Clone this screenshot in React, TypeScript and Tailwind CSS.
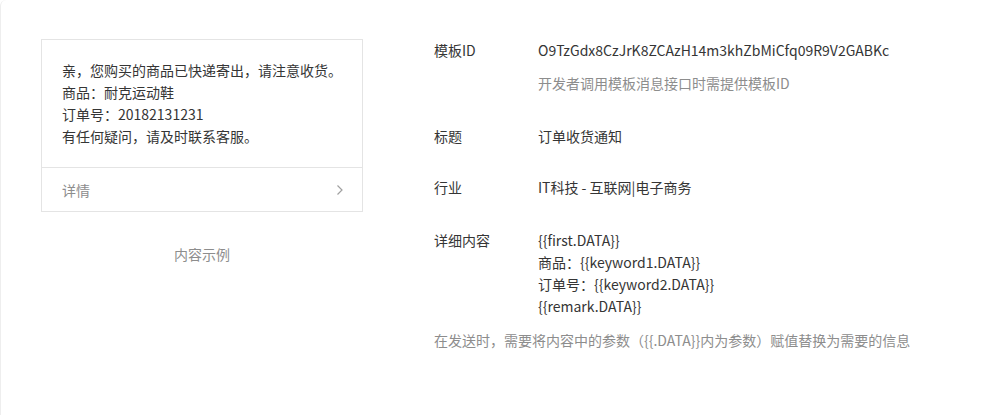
import React from 'react';

const font = { fontFamily: '"Microsoft YaHei", "Noto Sans CJK SC", sans-serif' };

const Row: React.FC<{ label: string; children: React.ReactNode; className?: string }> = ({ label, children, className }) => (
  <div className={`flex ${className ?? ''}`}>
    <div className="w-[104px] shrink-0">{label}</div>
    <div>{children}</div>
  </div>
);

export default function App() {
  return (
    <div style={font} className="h-[415px] w-[1001px] bg-white border-l border-[#eeeeee] rounded-tl-md text-[14px] leading-[22px] text-[#353535]">
      <div className="flex pt-[39px] pl-[40px]">
        {/* 内容示例 */}
        <div className="w-[322px] shrink-0">
          <div className="border border-[#e4e4e4]">
            <div className="px-[20px] pt-[19px] pb-[20px]">
              <p>亲，您购买的商品已快递寄出，请注意收货。</p>
              <p>商品：耐克运动鞋</p>
              <p>订单号：20182131231</p>
              <p>有任何疑问，请及时联系客服。</p>
            </div>
            <div className="flex items-center justify-between border-t border-[#e4e4e4] px-[20px] h-[44px] text-[#8d8d8d]">
              <span>详情</span>
              <svg width="8" height="12" viewBox="0 0 8 12" fill="none" className="mr-[-2px]">
                <path d="M1.5 1.5L6 6l-4.5 4.5" stroke="#a0a0a0" strokeWidth="1.2" />
              </svg>
            </div>
          </div>
          <div className="mt-[31px] text-center text-[#8d8d8d]">内容示例</div>
        </div>

        {/* 模板信息 */}
        <div className="ml-[71px]">
          <Row label="模板ID">
            <div>O9TzGdx8CzJrK8ZCAzH14m3khZbMiCfq09R9V2GABKc</div>
            <div className="mt-[11px] text-[#8d8d8d]">开发者调用模板消息接口时需提供模板ID</div>
          </Row>
          <Row label="标题" className="mt-[31px]">
            订单收货通知
          </Row>
          <Row label="行业" className="mt-[29px]">
            IT科技 - 互联网|电子商务
          </Row>
          <Row label="详细内容" className="mt-[31px]">
            <div>{'{{first.DATA}}'}</div>
            <div>商品：{'{{keyword1.DATA}}'}</div>
            <div>订单号：{'{{keyword2.DATA}}'}</div>
            <div>{'{{remark.DATA}}'}</div>
          </Row>
          <p className="mt-[12px] text-[#8d8d8d]">在发送时，需要将内容中的参数（{'{{.DATA}}'}内为参数）赋值替换为需要的信息</p>
        </div>
      </div>
    </div>
  );
}
